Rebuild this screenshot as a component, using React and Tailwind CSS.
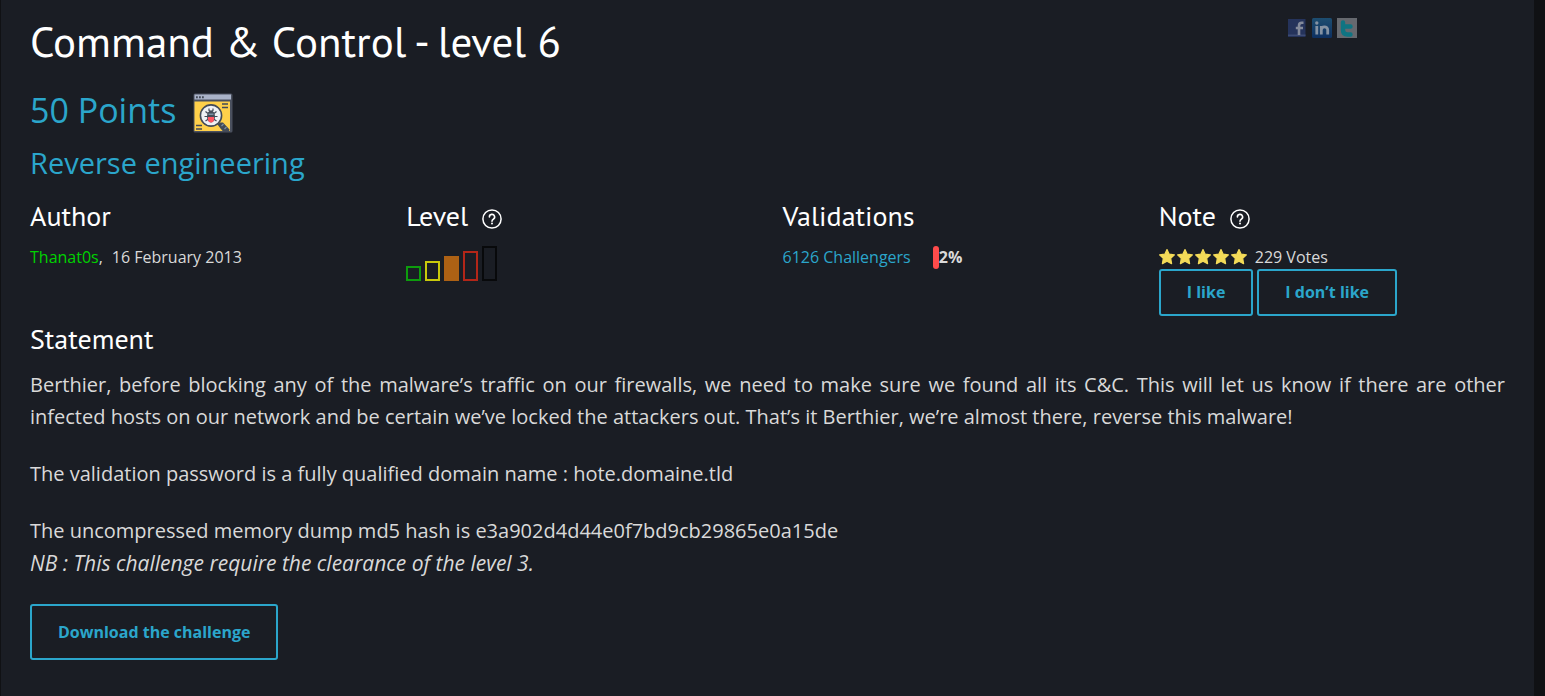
import React from "react";

function BugSearchIcon() {
  return (
    <svg viewBox="0 0 40 40" className="size-10" aria-hidden="true">
      <rect x="0.5" y="0.5" width="39" height="39" rx="1.5" fill="#4a505e" />
      <rect x="1.5" y="1.5" width="36.5" height="5" fill="#a9b2c8" />
      <rect x="1.5" y="8.5" width="35.5" height="29.5" fill="#ffd04a" />
      <path d="M3 3.2h1.8v2H3zM6 3.2h1.8v2H6zM9 3.2h1.8v2H9z" fill="#434a57" />
      <path d="M29 11h6M29 14.5h6M3 32.5h6M3 36h6" stroke="#434a57" strokeWidth="1.4" />
      <path d="M24.500 31.500l2.500-2 3 0 6.500 7-.5 2.500h-5.500l-3-3.500z" fill="#434a57" />
      <path d="M28.5 33l2-2M31.5 36l2-2" stroke="#7c8da3" strokeWidth="1.2" />
      <circle cx="18" cy="22.500" r="10.6" fill="#eff1f5" stroke="#434a57" strokeWidth="1.6" />
      <path
        d="M16 15.500v2l2 1 2-1v-2M12.500 18.500l2.500 2M23.500 18.500L21 20.500M11.500 23.500h4M24.500 23.500h-4M12.500 28l3-2M23.500 28l-3-2"
        fill="none"
        stroke="#434a57"
        strokeWidth="1.2"
      />
      <ellipse cx="18" cy="23.500" rx="4" ry="6" fill="#434a57" />
      <path d="M15 24h6v2a3 3.500 0 0 1-6 0z" fill="#ff5362" />
      <path d="M15.500 20.500h5v1.500h-5z" fill="#7990a2" />
    </svg>
  );
}

function HelpIcon() {
  return (
    <svg viewBox="0 0 20 20" className="size-5" fill="none" stroke="#fff" aria-hidden="true">
      <circle cx="10" cy="10" r="9.100" strokeWidth="1.500" />
      <path d="M7.400 8a2.600 2.600 0 1 1 3.900 2.200c-.9.500-1.300.9-1.300 2" strokeWidth="1.600" strokeLinecap="round" />
      <circle cx="10" cy="14.600" r="1" fill="#fff" stroke="none" />
    </svg>
  );
}

function Star() {
  return (
    <svg viewBox="0 0 16 16" className="size-4" aria-hidden="true">
      <path
        d="M8 .6l2.200 4.600 5.200.7-3.700 3.500.9 5.300L8 12.200l-4.600 2.500.9-5.300L.6 5.900l5.200-.7z"
        fill="#f4db58"
        stroke="#f4db58"
        strokeWidth="1.200"
        strokeLinejoin="round"
      />
    </svg>
  );
}

function FacebookIcon() {
  return (
    <svg viewBox="0 0 20 20" className="size-5" aria-hidden="true">
      <rect x="1" y="1" width="17.500" height="18" fill="#25335b" />
      <rect x="1" y="16.500" width="17.500" height="1.500" fill="#3c4b74" />
      <path d="M16.500 4.800h-1.700c-1.800 0-2.800.9-2.800 2.900V17M8.800 10h7.200" fill="none" stroke="#858b9b" strokeWidth="2.600" />
    </svg>
  );
}

function LinkedinIcon() {
  return (
    <svg viewBox="0 0 20 20" className="size-5" aria-hidden="true">
      <defs>
        <linearGradient id="linkedin-fill" x1="0" y1="0" x2="0" y2="1">
          <stop offset="0" stopColor="#1d4d70" />
          <stop offset="1" stopColor="#0d2f60" />
        </linearGradient>
      </defs>
      <rect width="20" height="20" rx="1.500" fill="url(#linkedin-fill)" />
      <path d="M4.800 8v8.500M9.300 16.500V8M9.300 12c0-4 6.400-4.200 6.400 0v4.500" fill="none" stroke="#8492a3" strokeWidth="2.800" />
      <circle cx="4.800" cy="5" r="1.700" fill="#8492a3" />
    </svg>
  );
}

function TwitterIcon() {
  return (
    <svg viewBox="0 0 20 20" className="size-5" aria-hidden="true">
      <rect width="20" height="20" fill="#66696f" />
      <path
        d="M6 4.500v7.500c0 3 1.500 4.500 4.500 4.500h3M6 8.500h7.500"
        fill="none"
        stroke="#0f7482"
        strokeWidth="4.400"
        strokeLinecap="round"
        strokeLinejoin="round"
      />
    </svg>
  );
}

function Heading({ children }) {
  return <h2 className="font-[PT_Sans,Lato,sans-serif] text-[28px] leading-9 text-white">{children}</h2>;
}

function Help({ label }) {
  return (
    <a href="#help" aria-label={label} className="mt-[6px]">
      <HelpIcon />
    </a>
  );
}

const outlineButton = "rounded-[3px] border-2 border-[#2ba6cb] px-[26px] text-center text-base font-bold text-[#2ba6cb]";

export default function App() {
  return (
    <div className="min-h-screen bg-[#101114] pr-[11px] pl-px font-[Open_Sans,sans-serif] text-[#d9d9d9]">
      <main className="min-h-screen border-b border-[#101114] bg-[#1a1d24] px-[29px] pt-[18px] pb-9">
        <header className="grid grid-cols-12 gap-x-[30px]">
          <h1 className="col-span-10 font-[PT_Sans,Lato,sans-serif] text-[43px] leading-[46px] text-white">
            Command &amp; Control - level 6
          </h1>
          <nav aria-label="Share" className="col-span-2 flex gap-[5px] pl-[3px]">
            <a href="#facebook" aria-label="Facebook"><FacebookIcon /></a>
            <a href="#linkedin" aria-label="LinkedIn"><LinkedinIcon /></a>
            <a href="#twitter" aria-label="Twitter"><TwitterIcon /></a>
          </nav>
        </header>

        <div className="mt-[22px] flex items-center gap-[17px] text-[#2ba6cb]">
          <p className="text-[34px] leading-[48px]">50 Points</p>
          <span className="pt-[6px]"><BugSearchIcon /></span>
        </div>
        <p className="mt-2 text-[29px] leading-[42px]">
          <a href="#category" className="text-[#2ba6cb]">Reverse engineering</a>
        </p>

        <div className="mt-[14px] grid grid-cols-4 gap-x-[30px]">
          <section>
            <Heading>Author</Heading>
            <p className="mt-[11px] flex gap-[9px] text-base leading-6">
              <span><a href="#author" className="text-[#00d200]">Thanat0s</a>,</span>
              <time dateTime="2013-02-16">16 February 2013</time>
            </p>
          </section>
          <section>
            <div className="flex items-center gap-[14px]">
              <Heading>Level</Heading>
              <Help label="About levels" />
            </div>
            <div role="img" aria-label="Medium" className="mt-3 flex items-end gap-1">
              <span className="h-[15px] w-[15px] border-2 border-[#0d9c0d]" />
              <span className="h-5 w-[15px] border-2 border-[#c9c90b]" />
              <span className="h-[25px] w-[15px] bg-[#ad6114]" />
              <span className="h-[30px] w-[15px] border-2 border-[#b32618]" />
              <span className="h-[35px] w-[15px] border-2 border-[#08090b]" />
            </div>
          </section>
          <section>
            <Heading>Validations</Heading>
            <div className="mt-[11px] flex items-center text-base leading-6">
              <a href="#challengers" className="mr-[22px] text-[#2ba6cb]">6126 Challengers</a>
              <span className="h-[23px] w-[6px] rounded-[3px] bg-[#ff4b4b]" />
              <span className="font-bold">2%</span>
            </div>
          </section>
          <section>
            <div className="flex items-center gap-[14px]">
              <Heading>Note</Heading>
              <Help label="About notes" />
            </div>
            <div className="mt-[11px] flex items-center gap-2 text-base leading-6">
              <span className="flex gap-[2px] pb-px" role="img" aria-label="5 stars">
                <Star />
                <Star />
                <Star />
                <Star />
                <Star />
              </span>
              <span>229 Votes</span>
            </div>
            <div className="flex gap-1">
              <button type="button" className={`${outlineButton} h-[47px] pb-[2px]`}>I like</button>
              <button type="button" className={`${outlineButton} h-[47px] pb-[2px]`}>I don’t like</button>
            </div>
          </section>
        </div>

        <section className="mt-[5px]">
          <Heading>Statement</Heading>
          <div className="mt-3 text-xl leading-8">
            <p className="text-justify">
              Berthier, before blocking any of the malware’s traffic on our firewalls, we need to make sure we found all
              its C&amp;C. This will let us know if there are other infected hosts on our network and be certain we’ve
              locked the attackers out. That’s it Berthier, we’re almost there, reverse this malware!
            </p>
            <p className="mt-[25px]">The validation password is a fully qualified domain name : hote.domaine.tld</p>
            <div className="mt-[25px]">
              <p>The uncompressed memory dump md5 hash is e3a902d4d44e0f7bd9cb29865e0a15de</p>
              <p className="text-[21px] leading-8">
                <em>NB : This challenge require the clearance of the level 3.</em>
              </p>
            </div>
          </div>
          <a href="#download" className={`${outlineButton} mt-[25px] inline-block py-[14px] leading-6`}>
            Download the challenge
          </a>
        </section>
      </main>
    </div>
  );
}
